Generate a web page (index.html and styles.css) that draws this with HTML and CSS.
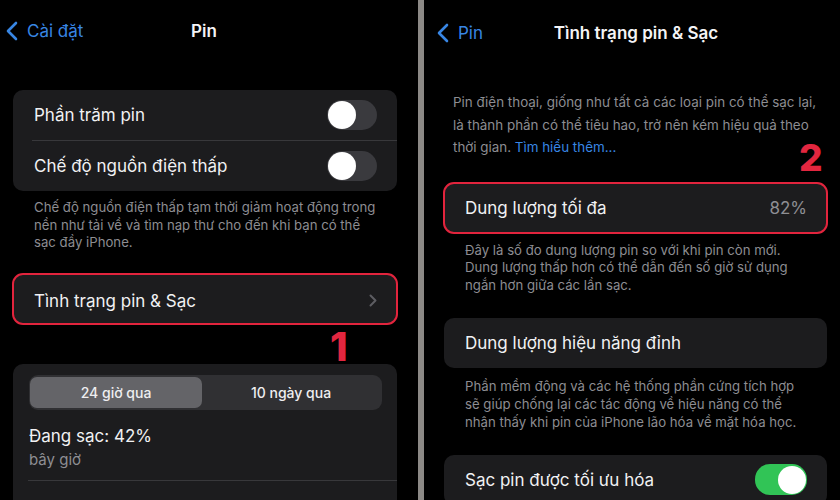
FILE: index.html
```html
<!DOCTYPE html>
<html lang="vi">
<head>
<meta charset="utf-8">
<title>Pin</title>
<link rel="stylesheet" href="styles.css">
</head>
<body>
<div class="screen">
  <section class="panel panel-left">
    <header class="nav">
      <a class="back">
        <svg viewBox="0 0 12 20" class="chev-back"><path d="M10 2 L2 10 L10 18" /></svg>
        <span>Cài đặt</span>
      </a>
      <h1 class="title">Pin</h1>
      <span></span>
    </header>

    <div class="group group-toggles">
      <div class="row"><span>Phần trăm pin</span><span class="toggle"></span></div>
      <div class="sep"></div>
      <div class="row"><span>Chế độ nguồn điện thấp</span><span class="toggle"></span></div>
    </div>
    <p class="foot foot-left">Chế độ nguồn điện thấp tạm thời giảm hoạt động trong<br>nền như tải về và tìm nạp thư cho đến khi bạn có thể<br>sạc đầy iPhone.</p>

    <div class="group highlight group-health">
      <div class="row"><span>Tình trạng pin &amp; Sạc</span>
        <svg viewBox="0 0 8 13" class="chev-fwd"><path d="M1.5 1.5 L6.5 6.5 L1.5 11.5" /></svg>
      </div>
    </div>
    <span class="marker marker-1">1</span>

    <div class="group group-usage">
      <div class="segmented">
        <span class="seg active">24 giờ qua</span>
        <span class="seg">10 ngày qua</span>
      </div>
      <div class="status">Đang sạc: 42%</div>
      <div class="sub">bây giờ</div>
      <div class="sep sep-usage"></div>
    </div>
  </section>

  <div class="divider"></div>

  <section class="panel panel-right">
    <header class="nav">
      <a class="back">
        <svg viewBox="0 0 12 20" class="chev-back"><path d="M10 2 L2 10 L10 18" /></svg>
        <span>Pin</span>
      </a>
      <h1 class="title">Tình trạng pin &amp; Sạc</h1>
      <span></span>
    </header>

    <p class="desc">Pin điện thoại, giống như tất cả các loại pin có thể sạc lại,<br>là thành phần có thể tiêu hao, trở nên kém hiệu quả theo<br>thời gian. <span class="link">Tìm hiểu thêm...</span></p>

    <span class="marker marker-2">2</span>
    <div class="group highlight group-capacity">
      <div class="row"><span>Dung lượng tối đa</span><span class="value">82%</span></div>
    </div>
    <p class="foot foot-capacity">Đây là số đo dung lượng pin so với khi pin còn mới.<br>Dung lượng thấp hơn có thể dẫn đến số giờ sử dụng<br>ngắn hơn giữa các lần sạc.</p>

    <div class="group group-peak">
      <div class="row"><span>Dung lượng hiệu năng đỉnh</span></div>
    </div>
    <p class="foot foot-peak">Phần mềm động và các hệ thống phần cứng tích hợp<br>sẽ giúp chống lại các tác động về hiệu năng có thể<br>nhận thấy khi pin của iPhone lão hóa về mặt hóa học.</p>

    <div class="group group-optimized">
      <div class="row"><span>Sạc pin được tối ưu hóa</span><span class="toggle on"></span></div>
    </div>
  </section>
</div>
</body>
</html>
```

FILE: styles.css
```css
* {
  box-sizing: border-box;
  margin: 0;
  padding: 0;
}

html, body {
  background: #000;
}

body {
  width: 840px;
  height: 500px;
  overflow: hidden;
  font-family: Inter, "Noto Sans", sans-serif;
  color: #f1f1f3;
}

.screen {
  display: flex;
  height: 500px;
}

.panel {
  position: relative;
  display: flex;
  flex-direction: column;
  overflow: hidden;
  background: #000;
}

.panel > * {
  flex-shrink: 0;
}

.panel-left {
  width: 418px;
}

.divider {
  width: 6px;
  background: #8c8986;
}

.panel-right {
  flex: 1;
}

/* navigation bar */
.nav {
  display: grid;
  grid-template-columns: 1fr auto 1fr;
  align-items: center;
}

.panel-left .nav {
  height: 62px;
  padding: 0 16px 0 6px;
}

.panel-right .nav {
  height: 66px;
  padding: 0 5px 0 13px;
}

.back {
  display: flex;
  align-items: center;
  gap: 9px;
  color: #3886e4;
  font-size: 17px;
}

.chev-back {
  width: 12px;
  height: 20px;
  fill: none;
  stroke: #3886e4;
  stroke-width: 2.6;
  stroke-linecap: round;
  stroke-linejoin: round;
}

.title {
  font-size: 17px;
  font-weight: 600;
  color: #f4f4f6;
}

/* grouped cards */
.group {
  background: #1c1c1e;
  border-radius: 10px;
}

.panel-left .group {
  margin-left: 13px;
  margin-right: 21px;
}

.panel-right .group {
  margin-left: 20px;
  margin-right: 13px;
}

.highlight {
  outline: 2px solid #e2243d;
  outline-offset: -1px;
}

.row {
  height: 50px;
  display: flex;
  align-items: center;
  justify-content: space-between;
  padding: 0 20px 0 21px;
  font-size: 17px;
}

.sep {
  height: 1px;
  margin-left: 19px;
  background: #38383b;
}

.toggle {
  width: 50px;
  height: 30px;
  border-radius: 15px;
  background: #3a3a3e;
  padding: 1px;
  display: flex;
}

.toggle::before {
  content: "";
  width: 28px;
  height: 28px;
  border-radius: 50%;
  background: #fff;
}

.toggle.on {
  width: 52px;
  height: 31px;
  background: #31c456;
  justify-content: flex-end;
  padding: 1.5px;
}

.toggle.on::before {
  width: 28px;
  height: 28px;
}

.chev-fwd {
  width: 8px;
  height: 13px;
  fill: none;
  stroke: #5d5d62;
  stroke-width: 2;
  stroke-linecap: round;
  stroke-linejoin: round;
}

.value {
  color: #8e8e93;
}

/* footers */
.foot {
  font-size: 13.2px;
  line-height: 17.5px;
  color: #8d8d92;
}

.foot-left {
  margin-top: 8px;
  padding-left: 34px;
}

.group-toggles {
  margin-top: 28px;
}

.group-health {
  margin-top: 22.5px;
}

.group-health .row {
  padding-top: 3px;
}

.marker {
  position: absolute;
  color: #e2263f;
  font-weight: 800;
  line-height: 1;
}

.marker-1 {
  left: 330px;
  top: 327px;
  font-size: 40px;
}

.marker-2 {
  left: 375px;
  top: 139px;
  font-size: 37px;
}

/* usage card */
.group-usage {
  margin-top: 40px;
  flex: 1 0 auto;
  border-radius: 10px 10px 0 0;
}

.segmented {
  margin: 11px 15px 0 16px;
  height: 35px;
  background: #303033;
  border-radius: 9px;
  padding: 2px 2px 2px 1px;
  display: grid;
  grid-template-columns: 172px 1fr;
}

.seg {
  display: flex;
  align-items: center;
  justify-content: center;
  font-size: 14px;
  font-weight: 500;
  color: #eeeef0;
}

.seg.active {
  background: #646468;
  border-radius: 7px;
}

.status {
  margin: 15px 0 0 16px;
  font-size: 17px;
  line-height: 22px;
}

.sub {
  margin: 3px 0 0 16px;
  font-size: 15px;
  line-height: 20px;
  color: #8e8e93;
}

.sep-usage {
  margin: 10px 0 0 15px;
}

/* right panel */
.desc {
  margin: 25px 0 0 29px;
  font-size: 13.4px;
  line-height: 22.5px;
  color: #8d8d92;
}

.link {
  color: #3886e4;
}

.group-capacity {
  margin-top: 24px;
}

.foot-capacity {
  margin-top: 9px;
  padding-left: 41px;
}

.group-peak {
  margin-top: 23.5px;
}

.foot-peak {
  margin-top: 9px;
  padding-left: 41px;
  line-height: 18px;
}

.group-optimized {
  margin-top: 24px;
}
```
